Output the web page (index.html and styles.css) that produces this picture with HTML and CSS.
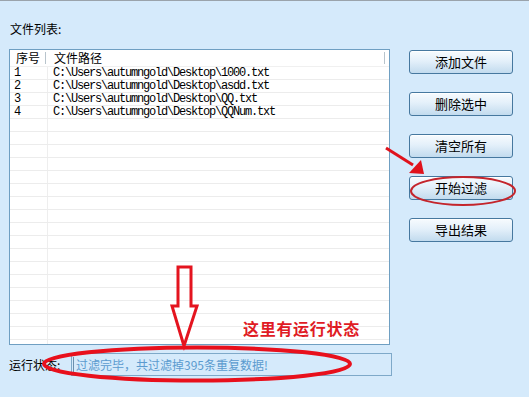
FILE: index.html
```html
<!DOCTYPE html>
<html>
<head>
<meta charset="UTF-8">
<link rel="stylesheet" href="styles.css">
</head>
<body>
<div class="window">
  <div class="left">
    <div class="title">文件列表:</div>
    <div class="list">
      <div class="list-head">
        <span class="col-no">序号</span><span class="sep"></span><span class="col-path">文件路径</span><span class="sep end"></span>
      </div>
      <div class="rows">
        <div class="row"><span class="c-no">1</span><span class="c-path">C:\Users\autumngold\Desktop\1000.txt</span></div>
        <div class="row"><span class="c-no">2</span><span class="c-path">C:\Users\autumngold\Desktop\asdd.txt</span></div>
        <div class="row"><span class="c-no">3</span><span class="c-path">C:\Users\autumngold\Desktop\QQ.txt</span></div>
        <div class="row"><span class="c-no">4</span><span class="c-path">C:\Users\autumngold\Desktop\QQNum.txt</span></div>
        <div class="row"><span class="c-no"></span><span class="c-path"></span></div>
        <div class="row"><span class="c-no"></span><span class="c-path"></span></div>
        <div class="row"><span class="c-no"></span><span class="c-path"></span></div>
        <div class="row"><span class="c-no"></span><span class="c-path"></span></div>
        <div class="row"><span class="c-no"></span><span class="c-path"></span></div>
        <div class="row"><span class="c-no"></span><span class="c-path"></span></div>
        <div class="row"><span class="c-no"></span><span class="c-path"></span></div>
        <div class="row"><span class="c-no"></span><span class="c-path"></span></div>
        <div class="row"><span class="c-no"></span><span class="c-path"></span></div>
        <div class="row"><span class="c-no"></span><span class="c-path"></span></div>
        <div class="row"><span class="c-no"></span><span class="c-path"></span></div>
        <div class="row"><span class="c-no"></span><span class="c-path"></span></div>
        <div class="row"><span class="c-no"></span><span class="c-path"></span></div>
        <div class="row"><span class="c-no"></span><span class="c-path"></span></div>
        <div class="row"><span class="c-no"></span><span class="c-path"></span></div>
        <div class="row"><span class="c-no"></span><span class="c-path"></span></div>
        <div class="row"><span class="c-no"></span><span class="c-path"></span></div>
        <div class="row"><span class="c-no"></span><span class="c-path"></span></div>
      </div>
    </div>
    <div class="status">
      <span class="status-label">运行状态:</span>
      <div class="status-box"><span class="caret"></span>过滤完毕，共过滤掉395条重复数据!</div>
    </div>
  </div>
  <div class="buttons">
    <button class="btn">添加文件</button>
    <button class="btn">删除选中</button>
    <button class="btn">清空所有</button>
    <button class="btn">开始过滤</button>
    <button class="btn">导出结果</button>
  </div>
</div>

<div class="note">这里有运行状态</div>

<svg class="marks" width="529" height="397" viewBox="0 0 529 397">
  <!-- arrow to the start button -->
  <line x1="386" y1="148" x2="413" y2="165" stroke="#e0121c" stroke-width="3"/>
  <polygon points="421,160 409,173 424,174" fill="#e0121c"/>
  <ellipse cx="463" cy="191" rx="52" ry="14" fill="none" stroke="#c4252c" stroke-width="2"/>
  <!-- hollow arrow down to the status -->
  <path d="M178 267 L191 267 L191 306 L197 306 L184 346 L172 306 L178 306 Z" fill="none" stroke="#e4141f" stroke-width="3" stroke-linejoin="miter"/>
  <ellipse cx="197" cy="364" rx="153" ry="16.5" fill="none" stroke="#e8101c" stroke-width="4"/>
</svg>
</body>
</html>
```

FILE: styles.css
```css
html, body{
  margin:0;
  padding:0;
  height:100%;
}
body{
  background:#d5eafb;
  font-family:"Noto Sans CJK SC", "Liberation Sans", sans-serif;
  font-size:12px;
  color:#000;
  position:relative;
  overflow:hidden;
}
.window{
  display:flex;
  border-top:1px solid #9aa3ab;
  padding-left:9px;
  height:396px;
  box-sizing:border-box;
}
.left{
  width:383px;
  display:flex;
  flex-direction:column;
}
.left > *{
  flex-shrink:0;
}
.title{
  height:48px;
  padding-top:20px;
  line-height:16px;
  padding-left:1px;
  box-sizing:border-box;
}
.list{
  width:381px;
  height:296px;
  box-sizing:border-box;
  border:1px solid #6f9fc2;
  background:#fff;
  overflow:hidden;
}
.list-head{
  display:flex;
  align-items:center;
  height:16px;
  line-height:16px;
  background:#fff;
  border-bottom:1px solid #f0f0f0;
}
.col-no{
  width:35px;
  padding-left:6px;
  box-sizing:border-box;
}
.sep{
  width:1px;
  height:12px;
  background:#b8c4cc;
}
.col-path{
  width:338px;
  padding-left:8px;
  box-sizing:border-box;
}
.row{
  display:flex;
  height:13px;
  line-height:13px;
  border-bottom:1px solid #ececec;
  box-sizing:border-box;
  font-family:"Liberation Mono", monospace;
  font-size:12px;
  letter-spacing:-1.2px;
}
.c-no{
  width:38px;
  padding-left:4px;
  box-sizing:border-box;
  border-right:1px solid #eeeeee;
}
.c-path{
  padding-left:5px;
}
.status{
  display:flex;
  align-items:center;
  margin-top:8px;
  height:23px;
}
.status-label{
  width:62px;
  line-height:16px;
}
.status-box{
  width:321px;
  height:23px;
  box-sizing:border-box;
  border:1px solid #7ea9c9;
  background:#d5eafb;
  color:#5b9bcf;
  line-height:21px;
  padding-left:1px;
  display:flex;
  align-items:center;
}
.caret{
  width:1px;
  height:15px;
  background:#6a8fae;
  margin-right:2px;
}
.buttons{
  display:flex;
  flex-direction:column;
  gap:18px;
  margin-left:17px;
  padding-top:49px;
}
.btn{
  width:104px;
  height:24px;
  padding:0;
  margin:0;
  border:1px solid #46789f;
  border-radius:3px;
  background:linear-gradient(#f7fbfe 0%, #e4f0fa 45%, #c2dbee 100%);
  box-shadow:inset 0 1px 0 #fff;
  font-family:"Noto Sans CJK SC", sans-serif;
  font-size:13px;
  line-height:20px;
  color:#000;
}
.note{
  position:absolute;
  left:243px;
  top:318px;
  color:#e01b24;
  font-weight:bold;
  font-size:16px;
  letter-spacing:0.7px;
  line-height:20px;
}
.marks{
  position:absolute;
  left:0;
  top:0;
  pointer-events:none;
}
```
